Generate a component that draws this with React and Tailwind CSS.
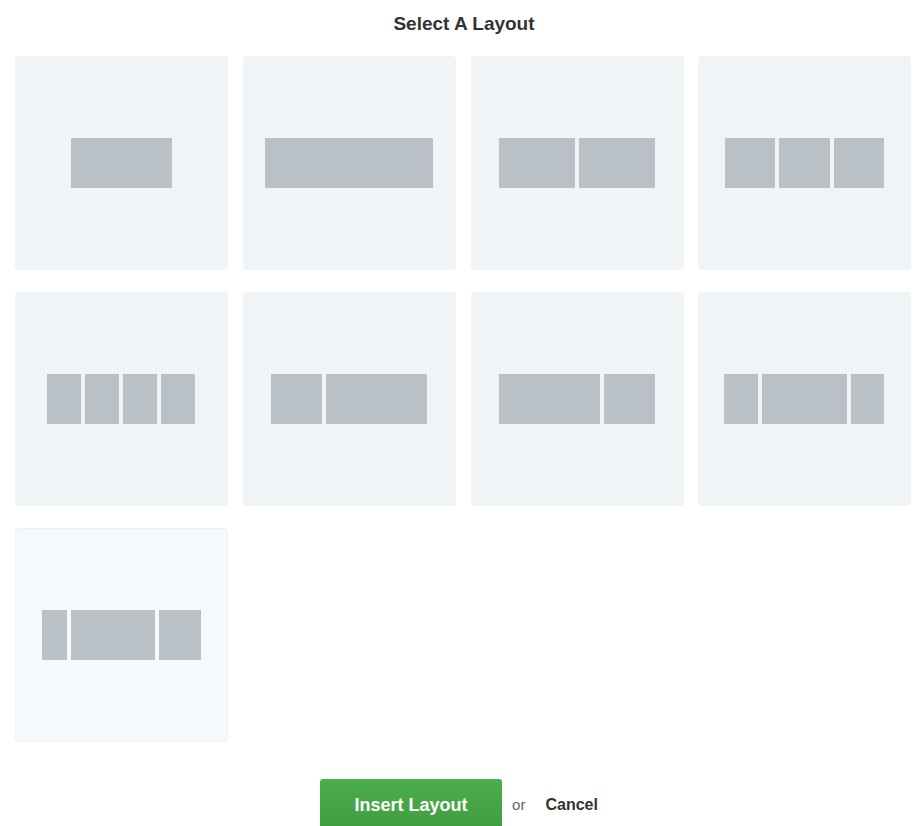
const layouts = [
  [[101]],
  [[168]],
  [[76], [76]],
  [[50], [51], [50]],
  [[34], [34], [34], [34]],
  [[51], [101]],
  [[101], [51]],
  [[34], [85], [33]],
  [[25], [84], [42]],
]

function Card({ cols, last }) {
  return (
    <button
      className={`h-[214px] w-[213px] rounded-[4px] flex items-center justify-center ${
        last ? 'bg-[#f6f9fb] border border-[#eef2f5]' : 'bg-[#f0f4f7]'
      }`}
    >
      <div className="flex gap-[4px] pr-[1px]">
        {cols.map(([w], i) => (
          <div key={i} className="h-[50px] bg-[#b9c1c6]" style={{ width: w }} />
        ))}
      </div>
    </button>
  )
}

export default function App() {
  return (
    <div className="w-[922px] bg-white font-['Liberation_Sans',Arial,sans-serif]">
      <h1 className="pt-[12px] text-center text-[19px] leading-[24px] font-bold text-[#333] pl-[6px]">
        Select A Layout
      </h1>
      <div className="mt-[20px] ml-[15px] grid grid-cols-[213px_213px_212px_213px] gap-x-[15px] gap-y-[22px]">
        {layouts.map((cols, i) => (
          <Card key={i} cols={cols} last={i === layouts.length - 1} />
        ))}
      </div>
      <div className="mt-[37px] flex items-center justify-center pr-[4px]">
        <button className="h-[52px] w-[182px] rounded-[3px] bg-gradient-to-b from-[#4cae4c] to-[#3f9c3f] text-white text-[18px] font-bold pt-[1px]">
          Insert Layout
        </button>
        <span className="ml-[10px] text-[15px] text-[#666]">or</span>
        <button className="ml-[20px] text-[16px] font-bold text-[#333]">Cancel</button>
      </div>
    </div>
  )
}
